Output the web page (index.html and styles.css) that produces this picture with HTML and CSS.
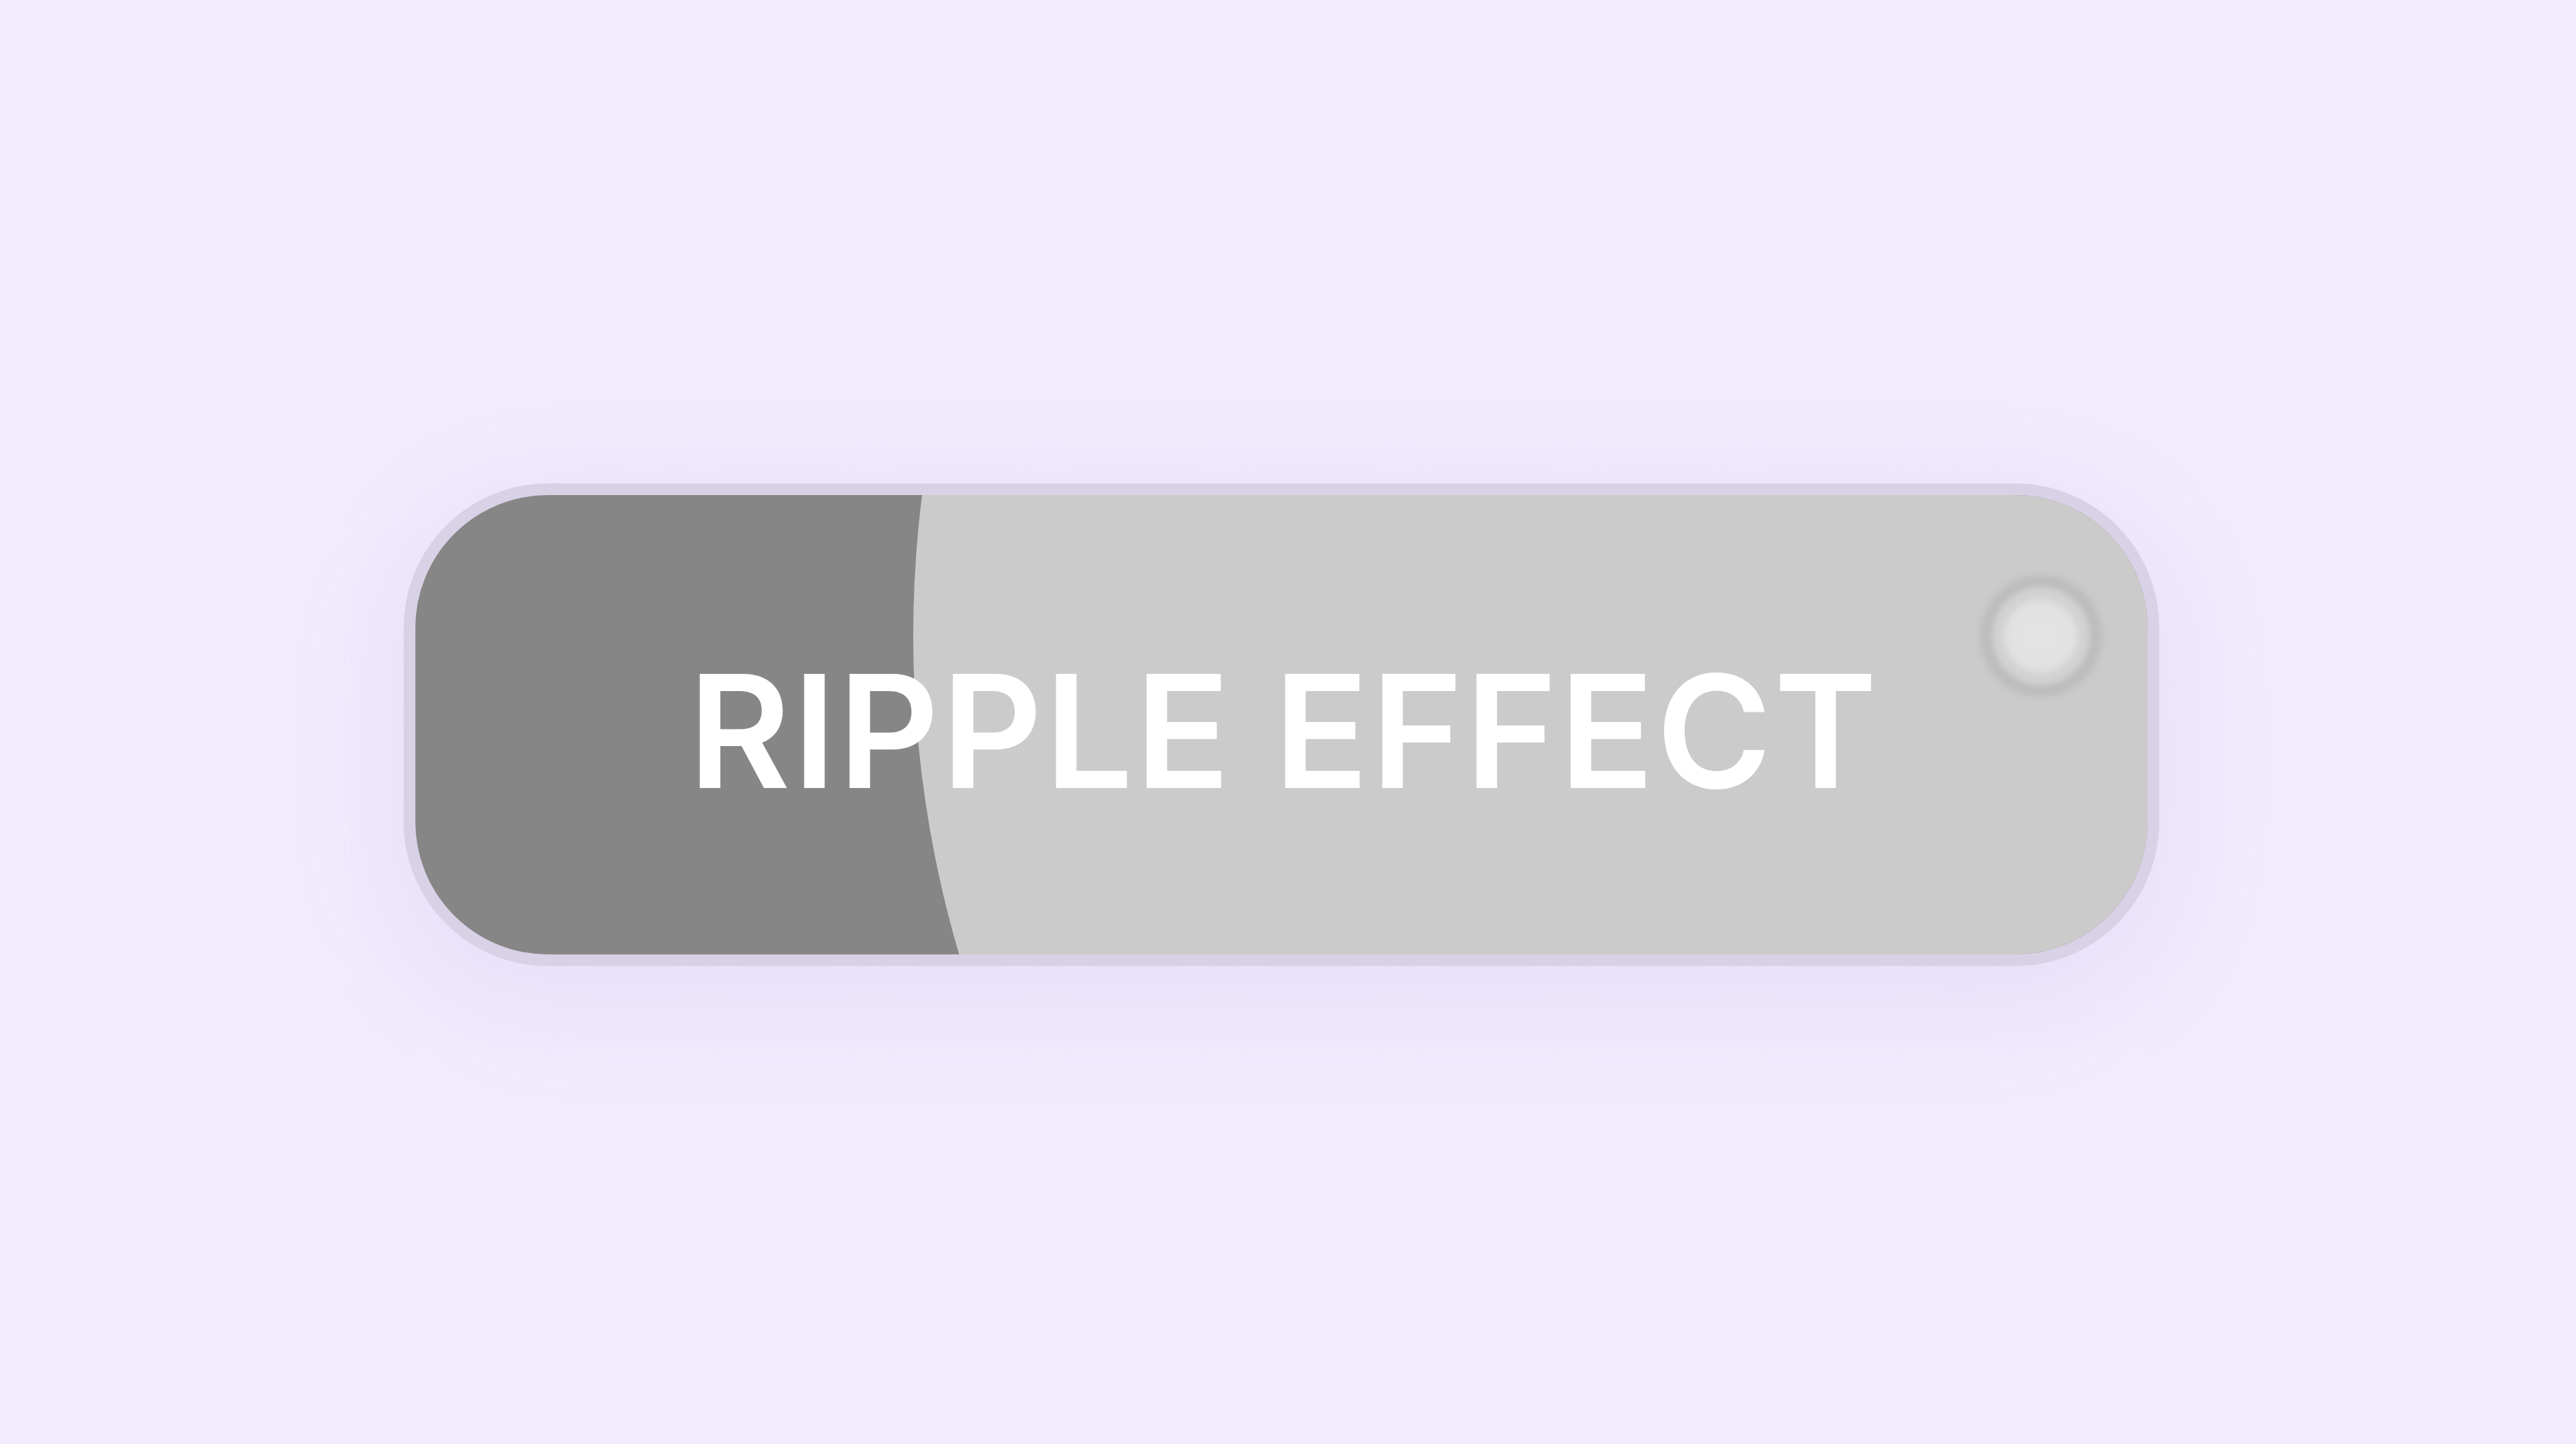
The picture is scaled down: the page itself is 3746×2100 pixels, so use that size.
FILE: index.html
```html
<!DOCTYPE html>
<html lang="en">
<head>
    <meta charset="UTF-8">
    <meta name="viewport" content="width=device-width, initial-scale=1.0">
    <title>Ripple Effect</title>
    <link rel="stylesheet" href="styles.css">
</head>
<body>
    <!-- Button demo -->
    <main class="stage">
        <button class="ripple-btn" type="button">
            <span class="ripple"></span>
            <span class="touch">
                <span class="touch-core"></span>
            </span>
            <span class="label">RIPPLE EFFECT</span>
        </button>
    </main>
</body>
</html>
```

FILE: styles.css
```css
/* General Styles */
* {
    margin: 0;
    padding: 0;
    box-sizing: border-box;
}

body {
    background-color: #f1ebfd;
    font-family: Inter, "Noto Sans", sans-serif;
}

.stage {
    display: flex;
    justify-content: center;
    align-items: center;
    min-height: 100vh;
    padding: 8px 20px 0 0;
}

/* Button */
.ripple-btn {
    position: relative;
    display: flex;
    justify-content: center;
    align-items: center;
    width: 2553px;
    height: 702px;
    padding: 18px 0 0 8px;
    border: 17px solid #d9d1e6;
    border-radius: 210px;
    background-color: #868686;
    overflow: hidden;
    cursor: pointer;
    box-shadow: 0 40px 160px rgba(190, 160, 235, 0.2);
    font-family: inherit;
}

/* Expanding wave, centred on the touch point */
.ripple {
    position: absolute;
    left: 724px;
    top: -1435px;
    width: 3280px;
    height: 3280px;
    border-radius: 50%;
    background-color: #cbcbcb;
}

/* Touch point */
.touch {
    position: absolute;
    left: 2275px;
    top: 116px;
    width: 178px;
    height: 178px;
    border-radius: 50%;
    border: 18px solid #bdbdbd;
    background-color: #d2d2d2;
    display: flex;
    justify-content: center;
    align-items: center;
    filter: blur(4px);
}

.touch-core {
    width: 106px;
    height: 106px;
    border-radius: 50%;
    background: radial-gradient(circle, #e4e4e4 0%, #e1e1e1 70%, #d6d6d6 100%);
}

.label {
    position: relative;
    color: #fff;
    font-size: 228px;
    font-weight: 600;
    letter-spacing: 3px;
}
```
